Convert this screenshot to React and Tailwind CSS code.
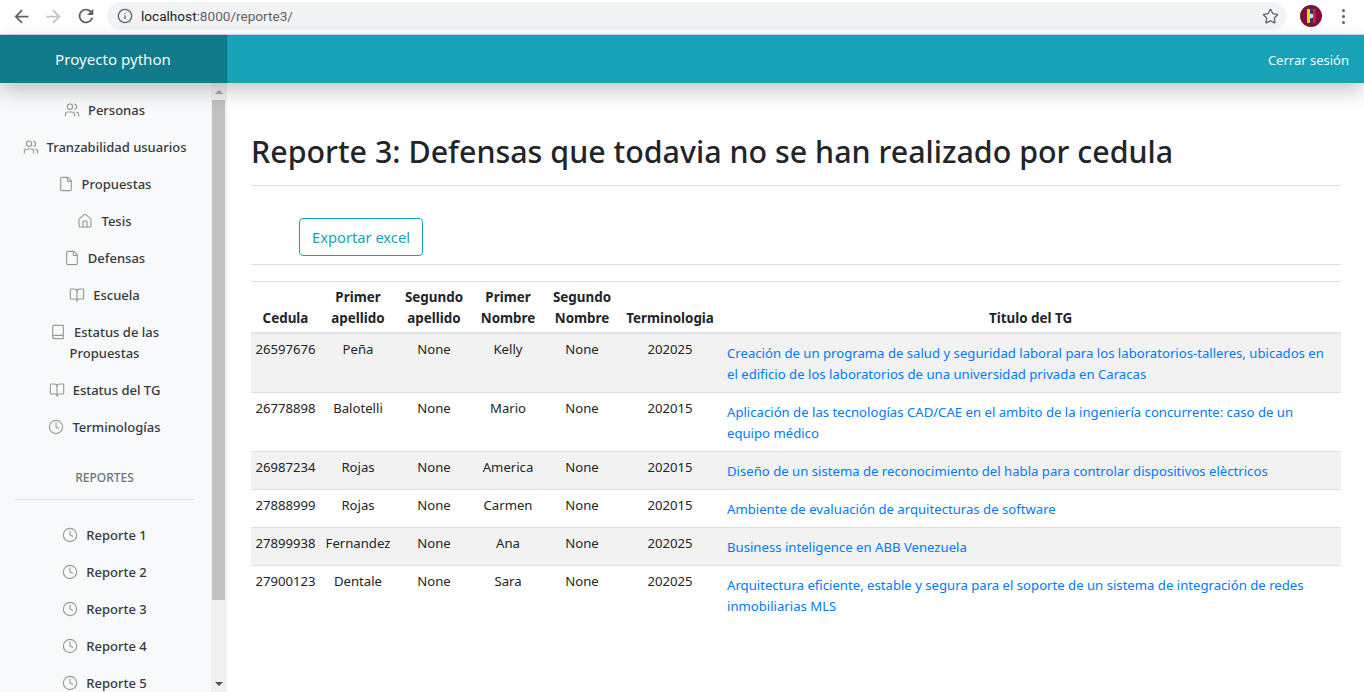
import React from "react";
import { Info, Star, Users, File, Home, Book, BookOpen, Clock } from "lucide-react";

const F = { fontFamily: '"Noto Sans", "Liberation Sans", sans-serif' };

const menu = [
  [Users, "Personas"],
  [Users, "Tranzabilidad usuarios"],
  [File, "Propuestas"],
  [Home, "Tesis"],
  [File, "Defensas"],
  [BookOpen, "Escuela"],
  [Book, "Estatus de las Propuestas"],
  [BookOpen, "Estatus del TG"],
  [Clock, "Terminologías"],
];
const reports = ["Reporte 1", "Reporte 2", "Reporte 3", "Reporte 4", "Reporte 5"];

const rows = [
  ["26597676", "Peña", "None", "Kelly", "None", "202025", "Creación de un programa de salud y seguridad laboral para los laboratorios-talleres, ubicados en el edificio de los laboratorios de una universidad privada en Caracas"],
  ["26778898", "Balotelli", "None", "Mario", "None", "202015", "Aplicación de las tecnologías CAD/CAE en el ambito de la ingeniería concurrente: caso de un equipo médico"],
  ["26987234", "Rojas", "None", "America", "None", "202015", "Diseño de un sistema de reconocimiento del habla para controlar dispositivos elèctricos"],
  ["27888999", "Rojas", "None", "Carmen", "None", "202015", "Ambiente de evaluación de arquitecturas de software"],
  ["27899938", "Fernandez", "None", "Ana", "None", "202025", "Business inteligence en ABB Venezuela"],
  ["27900123", "Dentale", "None", "Sara", "None", "202025", "Arquitectura eficiente, estable y segura para el soporte de un sistema de integración de redes inmobiliarias MLS"],
];

function Item({ icon: Icon, label }) {
  return (
    <a className="block px-4 py-2 text-center text-[13px] font-medium leading-[21px] text-[#343a40]">
      <Icon size={16} strokeWidth={1.7} className="mr-2 inline-block align-[-3px] text-[#999999]" />
      {label}
    </a>
  );
}

function Avatar() {
  return (
    <svg width="22" height="22" viewBox="0 0 22 22">
      <circle cx="11" cy="11" r="11" fill="#7d1238" />
      <rect x="7" y="4" width="3" height="14" fill="#f4d21f" />
      <rect x="10" y="4" width="3" height="14" fill="#27348b" />
      <rect x="13" y="4" width="2.5" height="14" fill="#d8232a" />
      <circle cx="11" cy="11" r="2.4" fill="#d5d5d5" />
    </svg>
  );
}

function Back({ className }) {
  return (
    <svg width="21" height="21" viewBox="0 0 24 24" fill="currentColor" className={className}>
      <path d="M20 11H7.83l5.59-5.59L12 4l-8 8 8 8 1.41-1.41L7.83 13H20v-2z" />
    </svg>
  );
}

function Reload({ className }) {
  return (
    <svg width="22" height="22" viewBox="0 0 24 24" fill="currentColor" className={className}>
      <path d="M17.65 6.35A7.958 7.958 0 0 0 12 4c-4.42 0-7.99 3.58-7.99 8s3.57 8 7.99 8c3.73 0 6.84-2.55 7.73-6h-2.08A5.99 5.99 0 0 1 12 18c-3.31 0-6-2.69-6-6s2.69-6 6-6c1.66 0 3.14.69 4.22 1.78L13 11h7V4l-2.35 2.35z" />
    </svg>
  );
}

export default function App() {
  return (
    <div className="flex h-[692px] w-full flex-col overflow-hidden bg-white text-[#212529]" style={F}>
      <div className="flex h-[35px] shrink-0 items-start border-b border-[#d4d6d9] bg-white pt-[2px]">
        <div className="flex h-[28px] w-[107px] shrink-0 items-center pl-[11px] text-[#5f6368]">
          <Back />
          <Back className="ml-[11px] rotate-180 text-[#bdc0c4]" />
          <Reload className="ml-[11px]" />
        </div>
        <div className="flex h-[28px] flex-1 items-center rounded-full bg-[#f1f3f4] pl-[10px] pr-[7px]">
          <Info size={16} strokeWidth={2} className="text-[#5f6368]" />
          <span className="ml-[8px] text-[13.6px] text-[#202124]" style={{ fontFamily: '"Roboto", sans-serif' }}>
            localhost<span className="text-[#5f6368]">:8000/reporte3/</span>
          </span>
          <Star size={17} strokeWidth={1.8} className="ml-auto text-[#5f6368]" />
        </div>
        <div className="ml-[14px] flex h-[28px] w-[64px] shrink-0 items-center">
          <Avatar />
          <div className="ml-[20px] flex flex-col gap-[3px]">
            <span className="h-[3px] w-[3px] rounded-full bg-[#5f6368]" />
            <span className="h-[3px] w-[3px] rounded-full bg-[#5f6368]" />
            <span className="h-[3px] w-[3px] rounded-full bg-[#5f6368]" />
          </div>
        </div>
      </div>

      <header className="relative z-10 flex h-[48px] shrink-0 items-center bg-[#17a2b8] shadow-[0_8px_20px_rgba(0,0,0,0.22)]">
        <div className="box-border flex h-full w-[227px] shrink-0 items-center justify-center border-r border-[#0e6a78] bg-[#117a8b] text-[15.1px] text-[#f4fbfc]">
          Proyecto python
        </div>
        <a className="ml-auto pr-[15px] pt-[3px] text-[13px] text-[#f0f9fa]">Cerrar sesión</a>
      </header>

      <div className="flex min-h-0 flex-1">
        <aside className="flex w-[227px] shrink-0 bg-[#f8f9fa]">
          <nav className="min-w-0 flex-1 overflow-hidden pr-[2px] pt-[8.5px]">
            {menu.map(([icon, label]) => (
              <Item key={label} icon={icon} label={label} />
            ))}
            <h6 className="mt-[12px] px-4 py-0 pt-[11px] text-center text-[12px] font-medium uppercase leading-[18px] text-[#6c757d]">
              Reportes
            </h6>
            <hr className="ml-[15px] mr-[15px] mb-[17px] mt-[12px] border-t border-[#dee2e6]" />
            {reports.map((r) => (
              <Item key={r} icon={Clock} label={r} />
            ))}
          </nav>
          <div className="flex w-[16px] shrink-0 flex-col bg-[#f1f1f1]">
            <div className="flex h-[17px] shrink-0 items-center justify-center">
              <span className="h-0 w-0 border-x-[4px] border-b-[4px] border-x-transparent border-b-[#a3a3a3]" />
            </div>
            <div className="ml-[1px] h-[500px] w-[13px] shrink-0 bg-[#c1c1c1]" />
            <div className="mt-auto flex h-[17px] shrink-0 items-center justify-center">
              <span className="h-0 w-0 border-x-[4px] border-t-[4px] border-x-transparent border-t-[#505050]" />
            </div>
          </div>
        </aside>

        <main className="min-w-0 flex-1 overflow-hidden pl-[24px] pr-[23px]">
          <h1 className="mt-[47px] border-b border-[#dee2e6] pb-[11px] text-[30.4px] font-medium leading-[44px] text-[#212529]">
            Reporte 3: Defensas que todavia no se han realizado por cedula
          </h1>
          <div className="border-b border-[#dee2e6] pb-[8px] pl-[48px] pt-[32px]">
            <button className="h-[38px] w-[124px] rounded border border-[#17a2b8] text-[14.7px] text-[#17a2b8]">
              Exportar excel
            </button>
          </div>
          <table className="mt-[16px] w-full table-fixed border-collapse text-[13.15px] leading-[21px]">
            <colgroup>
              <col className="w-[69px]" />
              <col className="w-[76px]" />
              <col className="w-[76px]" />
              <col className="w-[72px]" />
              <col className="w-[76px]" />
              <col className="w-[100px]" />
              <col />
            </colgroup>
            <thead>
              <tr className="border-y border-b-2 border-[#dee2e6]">
                {["Cedula", "Primer apellido", "Segundo apellido", "Primer Nombre", "Segundo Nombre", "Terminologia", "Titulo del TG"].map((h) => (
                  <th key={h} className="px-[2px] pb-[3px] pt-[5px] text-center align-bottom text-[13.4px] font-bold">
                    {h}
                  </th>
                ))}
              </tr>
            </thead>
            <tbody>
              {rows.map((r, i) => (
                <tr key={r[0]} className={`${i < rows.length - 1 ? "border-b border-[#dee2e6]" : ""} ${i % 2 === 0 ? "bg-[#f2f2f2]" : ""}`}>
                  {r.slice(0, 6).map((c, j) => (
                    <td key={j} className="px-[4px] pb-[3px] pt-[5px] text-center align-top">
                      {c}
                    </td>
                  ))}
                  <td className="pb-[7px] pl-[7px] pr-[12px] pt-[9px] align-top text-[#007bff]">{r[6]}</td>
                </tr>
              ))}
            </tbody>
          </table>
        </main>
      </div>
    </div>
  );
}
